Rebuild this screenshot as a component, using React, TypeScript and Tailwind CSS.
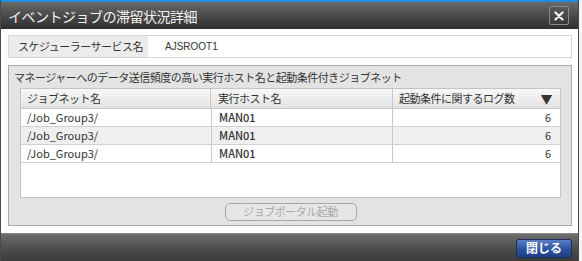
const JP = "font-['Noto_Sans_CJK_JP',sans-serif]";

const ROWS = [
  { net: "/Job_Group3/", host: "MAN01", count: 6 },
  { net: "/Job_Group3/", host: "MAN01", count: 6 },
  { net: "/Job_Group3/", host: "MAN01", count: 6 },
];

export default function App() {
  return (
    <div className={`h-[261px] w-[582px] overflow-hidden bg-[#f4f4f4] ${JP}`}>
      <div className="flex h-[261px] w-[579px] flex-col border-x border-[#4a4a4a]">
        {/* Title bar */}
        <div className="flex h-[29px] shrink-0 items-center justify-between border-t-2 border-[#1d8ee0] bg-gradient-to-b from-[#6a6a6a] via-[#4a4a4a] to-[#2e2e2e] pl-[7px] pr-[9px]">
          <span className="text-[14px] leading-none tracking-[-0.5px] text-[#f2f2f2]">
            イベントジョブの滞留状況詳細
          </span>
          <button className="flex h-[19px] w-[20px] items-center justify-center rounded-[2px] border border-[#8a8a8a] bg-gradient-to-b from-[#5a5a5a] to-[#3a3a3a]">
            <svg width="10" height="10" viewBox="0 0 10 10">
              <path d="M1.5 1.5 L8.5 8.5 M8.5 1.5 L1.5 8.5" stroke="#f4f4f4" strokeWidth="2.2" strokeLinecap="round" />
            </svg>
          </button>
        </div>

        {/* Body */}
        <div className="flex flex-1 flex-col bg-white pl-[7px] pr-[6px] pt-[6px] text-[11px] text-[#333]">
          {/* Scheduler service */}
          <div className="flex h-[23px] border border-[#d6d6d6]">
            <div className="flex w-[139px] items-center bg-[#ececec] pl-[9px] tracking-[-0.5px]">
              スケジューラーサービス名
            </div>
            <div className="flex flex-1 items-center bg-white pl-[17px] text-[10px] font-['Liberation_Sans',sans-serif]">
              AJSROOT1
            </div>
          </div>

          {/* Group panel */}
          <div className="mt-[7px] flex h-[161px] flex-col border border-[#a8a8a8] bg-[#e3e3e3] pl-[11px] pr-[10px]">
            <div className="-ml-[6px] flex h-[22px] items-center tracking-[-0.5px]">
              マネージャーへのデータ送信頻度の高い実行ホスト名と起動条件付きジョブネット
            </div>
            <div className="flex h-[110px] flex-col border border-[#c4c4c4] bg-white">
              <div className="flex h-[20px] border-b border-[#c8c8c8] bg-gradient-to-b from-[#f7f7f7] to-[#e4e4e4] tracking-[-0.5px]">
                <div className="flex w-[190px] items-center border-r border-[#c8c8c8] pl-[6px]">ジョブネット名</div>
                <div className="flex w-[182px] items-center border-r border-[#c8c8c8] pl-[7px]">実行ホスト名</div>
                <div className="flex flex-1 items-center justify-between pl-[6px] pr-[8px]">
                  <span>起動条件に関するログ数</span>
                  <span className="text-[12px]">▼</span>
                </div>
              </div>
              {ROWS.map((r, i) => (
                <div
                  key={i}
                  className={
                    "flex h-[18px] border-b border-[#d0d0d0] " +
                    (i % 2 === 1 ? "bg-[#efefef]" : "bg-white")
                  }
                >
                  <div className="flex w-[190px] items-center pl-[6px]">{r.net}</div>
                  <div className="flex w-[182px] items-center border-x border-[#c8c8c8] pl-[7px] font-medium">
                    {r.host}
                  </div>
                  <div className="flex flex-1 items-center justify-end pr-[9px]">{r.count}</div>
                </div>
              ))}
            </div>
            <div className="flex flex-1 items-center justify-center">
              <button className="flex h-[18px] w-[132px] items-center justify-center rounded-[5px] border border-[#a8a8a8] bg-[#e6e6e6] text-[#a8a8a8] tracking-[-0.5px]">
                ジョブポータル起動
              </button>
            </div>
          </div>
          <div className="h-[7px]" />
        </div>

        {/* Footer */}
        <div className="flex h-[29px] shrink-0 items-center justify-end border-t border-[#888] bg-gradient-to-b from-[#6e6e6e] via-[#4e4e4e] to-[#3a3a3a] pr-[6px]">
          <button className="flex h-[19px] w-[56px] items-center justify-center rounded-[3px] border border-[#1c2d5e] bg-gradient-to-b from-[#5a7fc4] via-[#2f55a3] to-[#1f3f86] text-[12px] font-bold text-white">
            閉じる
          </button>
        </div>
      </div>
    </div>
  );
}
